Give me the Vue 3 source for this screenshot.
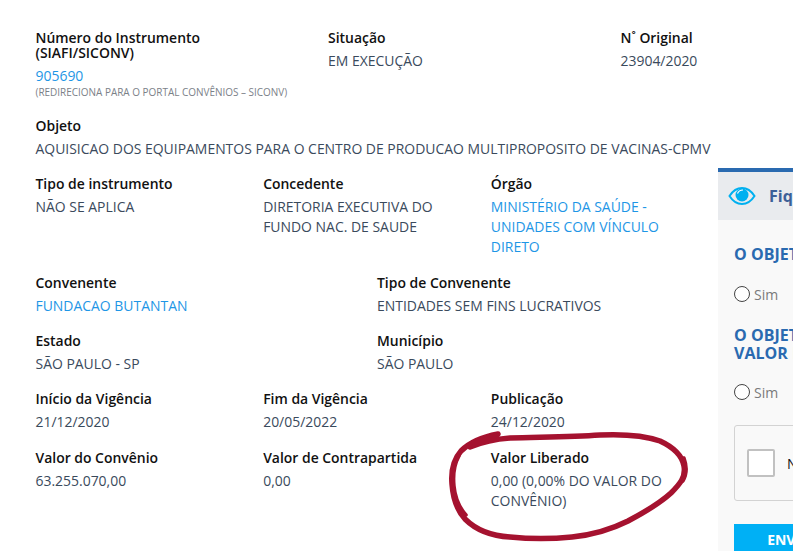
<script setup>
const rows = [
  {
    cols: 3,
    items: [
      { label: 'Tipo de instrumento', value: 'NÃO SE APLICA' },
      { label: 'Concedente', value: 'DIRETORIA EXECUTIVA DO FUNDO NAC. DE SAUDE' },
      { label: 'Órgão', value: 'MINISTÉRIO DA SAÚDE - UNIDADES COM VÍNCULO DIRETO', link: true }
    ]
  },
  {
    cols: 2,
    items: [
      { label: 'Convenente', value: 'FUNDACAO BUTANTAN', link: true },
      { label: 'Tipo de Convenente', value: 'ENTIDADES SEM FINS LUCRATIVOS' }
    ]
  },
  {
    cols: 2,
    items: [
      { label: 'Estado', value: 'SÃO PAULO - SP' },
      { label: 'Município', value: 'SÃO PAULO' }
    ]
  },
  {
    cols: 3,
    items: [
      { label: 'Início da Vigência', value: '21/12/2020' },
      { label: 'Fim da Vigência', value: '20/05/2022' },
      { label: 'Publicação', value: '24/12/2020' }
    ]
  },
  {
    cols: 3,
    items: [
      { label: 'Valor do Convênio', value: '63.255.070,00' },
      { label: 'Valor de Contrapartida', value: '0,00' },
      { label: 'Valor Liberado', value: '0,00 (0,00% DO VALOR DO CONVÊNIO)' }
    ]
  }
]
</script>

<template>
  <div class="page">
    <div class="top">
      <div class="field">
        <div class="label">Número do Instrumento<br />(SIAFI/SICONV)</div>
        <div class="value link">905690</div>
        <div class="note">(REDIRECIONA PARA O PORTAL CONVÊNIOS – SICONV)</div>
      </div>
      <div class="field">
        <div class="label">Situação</div>
        <div class="value">EM EXECUÇÃO</div>
      </div>
      <div class="field">
        <div class="label">N˚ Original</div>
        <div class="value">23904/2020</div>
      </div>
    </div>

    <div class="field objeto">
      <div class="label">Objeto</div>
      <div class="value nowrap">AQUISICAO DOS EQUIPAMENTOS PARA O CENTRO DE PRODUCAO MULTIPROPOSITO DE VACINAS-CPMV</div>
    </div>

    <div
      v-for="(row, i) in rows"
      :key="i"
      class="row"
      :class="row.cols === 2 ? 'two' : 'three'"
    >
      <div v-for="item in row.items" :key="item.label" class="field">
        <div class="label">{{ item.label }}</div>
        <div class="value" :class="{ link: item.link }">{{ item.value }}</div>
      </div>
    </div>

    <aside class="panel">
      <div class="panel-head">
        <svg class="eye" viewBox="0 0 28 20" width="28" height="20" aria-hidden="true">
          <path d="M1.500 10C5 4.500 9 2 14 2s9 2.500 12.500 8C23 15.500 19 18 14 18S5 15.500 1.500 10Z" fill="none" stroke="#00b0f0" stroke-width="2" />
          <circle cx="14" cy="9" r="6.500" fill="#00b0f0" />
          <path d="M9.500 7.500C10.500 5 12.500 4 15 4" fill="none" stroke="#fff" stroke-width="1.200" />
        </svg>
        <span class="panel-title">Fique de olho</span>
      </div>
      <div class="panel-body">
        <div class="question">O OBJETO DA PARCERIA</div>
        <label class="radio first"><span class="dot"></span>Sim</label>
        <div class="question second">O OBJETO ESTÁ ADEQUADO<br />VALOR DA PARCERIA</div>
        <label class="radio"><span class="dot"></span>Sim</label>
        <div class="captcha">
          <span class="check"></span>
          <span class="captcha-text">Não sou um robô</span>
        </div>
        <div class="send">ENVIAR</div>
      </div>
    </aside>

    <svg class="scribble" viewBox="0 0 793 551" width="793" height="551" aria-hidden="true">
      <path
        d="M498 434C482 437 470 442 461 451C453 460 451 472 452 484C453 498 456 509 465 519C476 530 492 536 510 537C530 539 552 539 572 537C592 535 610 530 628 521C645 512 660 503 671 493C680 484 686 477 684 466C682 455 673 447 660 441C643 435 622 434 600 435C570 437 540 437 510 438C495 439 482 442 470 447"
        fill="none"
        stroke="#a5122f"
        stroke-width="5.500"
        stroke-linecap="round"
        stroke-linejoin="round"
      />
      <path
        d="M459 456C454 465 453 476 454 486C455 497 459 507 466 515M684 458C687 466 687 474 683 481"
        fill="none"
        stroke="#a5122f"
        stroke-width="3.500"
        stroke-linecap="round"
      />
    </svg>
  </div>
</template>

<style scoped>
.page {
  position: relative;
  width: 793px;
  height: 551px;
  overflow: hidden;
  box-sizing: border-box;
  padding: 30px 0 0 35.500px;
  background: #fff;
  font-family: "Open Sans", "Liberation Sans", sans-serif;
  font-size: 13.940px;
  color: #34495e;
}
.top {
  display: grid;
  grid-template-columns: repeat(3, 292.5px);
  width: 877px;
}
.field {
  min-width: 0;
}
.label {
  font-weight: 600;
  line-height: 15px;
  color: #111;
  margin-bottom: 6px;
}
.value {
  line-height: 20px;
  color: #3a4a5c;
  padding-right: 20px;
}
.nowrap {
  white-space: nowrap;
  padding-right: 0;
}
.link {
  color: #1e96e6;
}
.note {
  font-size: 9.960px;
  line-height: 13px;
  color: #7b8188;
  white-space: nowrap;
}
.objeto {
  margin-top: 19px;
}
.row {
  display: grid;
  width: 683px;
  margin-top: 17.300px;
}
.objeto + .row {
  margin-top: 16.500px;
}
.objeto + .row + .row {
  margin-top: 18.200px;
}
.three {
  grid-template-columns: repeat(3, 1fr);
}
.two {
  grid-template-columns: repeat(2, 1fr);
}
.panel {
  position: absolute;
  left: 718px;
  top: 168px;
  width: 340px;
  height: 420px;
  border-top: 4px solid #2a6ab0;
  background: #f9f9f9;
  box-sizing: border-box;
}
.panel-head {
  display: flex;
  align-items: center;
  gap: 13px;
  height: 48px;
  padding-left: 10px;
  background: #e9ebee;
}
.panel-title {
  font-size: 16px;
  font-weight: 700;
  color: #3d6098;
}
.panel-body {
  padding: 25px 16px 0;
}
.question {
  font-size: 16px;
  font-weight: 700;
  line-height: 18px;
  color: #2a6ab0;
  white-space: nowrap;
}
.question.second {
  margin-top: 22px;
}
.radio {
  display: flex;
  align-items: center;
  gap: 4px;
  height: 20px;
  margin-top: 20px;
  color: #7a7a7a;
  font-size: 14px;
}
.radio.first {
  margin-top: 21px;
}
.dot {
  width: 14px;
  height: 14px;
  border: 1px solid #444;
  border-radius: 50%;
  background: #fff;
}
.captcha {
  display: flex;
  align-items: center;
  gap: 12px;
  width: 300px;
  height: 76px;
  margin-top: 23px;
  padding-left: 12px;
  box-sizing: border-box;
  border: 1px solid #d3d3d3;
  border-radius: 3px;
  background: #f9f9f9;
}
.check {
  width: 24px;
  height: 24px;
  border: 2px solid #c1c1c1;
  border-radius: 2px;
  background: #fff;
}
.captcha-text {
  color: #111;
  font-size: 14px;
}
.send {
  width: 118px;
  height: 40px;
  margin-top: 23px;
  text-align: center;
  line-height: 32px;
  font-weight: 700;
  color: #fff;
  background: #00b0f5;
}
.scribble {
  position: absolute;
  left: 0;
  top: 0;
  pointer-events: none;
}
</style>
